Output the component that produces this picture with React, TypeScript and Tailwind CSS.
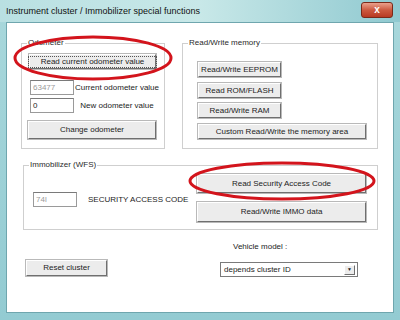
import React from 'react';

const btn =
  'flex items-center justify-center bg-[#ececec] border border-t-white border-l-white border-r-[#6f6f6f] border-b-[#6f6f6f] shadow-[0_0_0_1px_#b9b9b9] text-[#1c1c1c] whitespace-nowrap';

const input =
  'h-[15px] w-[44px] border border-[#9a9a9a] border-t-[#7a7a7a] bg-white px-[2px] flex items-center';

const Group = ({
  label,
  className,
  children,
}: {
  label: string;
  className: string;
  children: React.ReactNode;
}) => (
  <div className={`relative border border-[#cfcfcf] ${className}`}>
    <span className="absolute -top-[6px] left-[5px] bg-white px-[1px] leading-[10px] text-[#2a2a2a]">
      {label}
    </span>
    {children}
  </div>
);

export default function App() {
  return (
    <div className="relative h-[320px] w-[400px] overflow-hidden bg-gradient-to-b from-[#a9d8dc] to-[#93cbd2] font-['Liberation_Sans',Arial,sans-serif] text-[8px] text-[#1c1c1c]">
      {/* title bar */}
      <div className="flex h-[22px] items-start justify-between bg-gradient-to-r from-[#b9e0e2] via-[#c8e8e8] to-[#8fc9d0] pl-[6px] pr-[7px]">
        <span className="mt-[6px] text-[9px] leading-[11px] text-[#111]">
          Instrument cluster / Immobilizer special functions
        </span>
        <div className="mt-[2px] flex h-[16px] w-[32px] items-center justify-center rounded-[3px] border border-[#7a2a1a] bg-gradient-to-b from-[#e9a08c] via-[#cc5a40] to-[#b83a22] text-[10px] font-bold leading-none text-white">
          x
        </div>
      </div>

      {/* client area */}
      <div className="mx-[6px] flex h-[291px] w-[388px] flex-col border border-[#6fa6ae] bg-white">
        <div className="ml-[14px] mt-[20px] flex gap-[17px]">
          <Group label="Odometer" className="h-[106px] w-[144px]">
            <div className="flex flex-col pt-[10px]">
              <div className={`${btn} ml-[7px] h-[15px] w-[127px]`}>
                <span className="border border-dotted border-[#555] px-[12px] leading-[10px]">
                  Read current odometer value
                </span>
              </div>
              <div className="ml-[8px] mt-[11px] flex items-center">
                <div className={`${input} text-[#9a9a9a]`}>63477</div>
                <span className="flex-1 pr-[4px] text-center">Current odometer value</span>
              </div>
              <div className="ml-[8px] mt-[3px] flex items-center">
                <div className={input}>0</div>
                <span className="flex-1 pr-[4px] text-center">New odometer value</span>
              </div>
              <div className={`${btn} ml-[6px] mt-[8px] h-[18px] w-[128px]`}>Change odometer</div>
            </div>
          </Group>

          <Group label="Read/Write memory" className="h-[106px] w-[196px]">
            <div className="flex flex-col items-start pl-[15px] pt-[18px]">
              <div className={`${btn} h-[15px] w-[83px]`}>Read/Write EEPROM</div>
              <div className={`${btn} mt-[6px] h-[15px] w-[83px]`}>Read ROM/FLASH</div>
              <div className={`${btn} mt-[5px] h-[15px] w-[83px]`}>Read/Write RAM</div>
              <div className={`${btn} mt-[6px] h-[15px] w-[168px]`}>
                Custom Read/Write the memory area
              </div>
            </div>
          </Group>
        </div>

        <Group label="Immobilizer (WFS)" className="ml-[16px] mt-[16px] h-[65px] w-[355px]">
          <div className="flex pl-[9px]">
            <div className="mt-[11px] flex items-center">
              <div className={`${input} text-[#9a9a9a]`}>74l</div>
              <span className="ml-[11px] w-[109px]">SECURITY ACCESS CODE</span>
            </div>
            <div className="mt-[8px] flex flex-col gap-[9px]">
              <div className={`${btn} h-[19px] w-[169px]`}>Read Security Access Code</div>
              <div className={`${btn} h-[20px] w-[169px]`}>Read/Write IMMO data</div>
            </div>
          </div>
        </Group>

        <div className="ml-[19px] mt-[11px] flex items-start">
          <div className={`${btn} mt-[19px] h-[16px] w-[81px]`}>Reset cluster</div>
          <div className="ml-[113px] flex flex-col">
            <span className="ml-[13px] leading-[12px]">Vehicle model :</span>
            <div className="mt-[9px] flex h-[15px] w-[138px] items-center justify-between border border-[#7a7a7a] bg-white pl-[3px] pr-[2px]">
              <span>depends cluster ID</span>
              <div className="flex h-[10px] w-[11px] items-center justify-center border border-t-white border-l-white border-r-[#6f6f6f] border-b-[#6f6f6f] bg-[#ececec] text-[5px] leading-none">
                ▼
              </div>
            </div>
          </div>
        </div>
      </div>

      {/* red highlight marks */}
      <svg className="pointer-events-none absolute left-0 top-0" width="400" height="320">
        <ellipse cx="93" cy="58" rx="78" ry="21" fill="none" stroke="#d3141c" strokeWidth="3" />
        <ellipse cx="282" cy="181" rx="92" ry="18" fill="none" stroke="#d3141c" strokeWidth="3" />
      </svg>
    </div>
  );
}
